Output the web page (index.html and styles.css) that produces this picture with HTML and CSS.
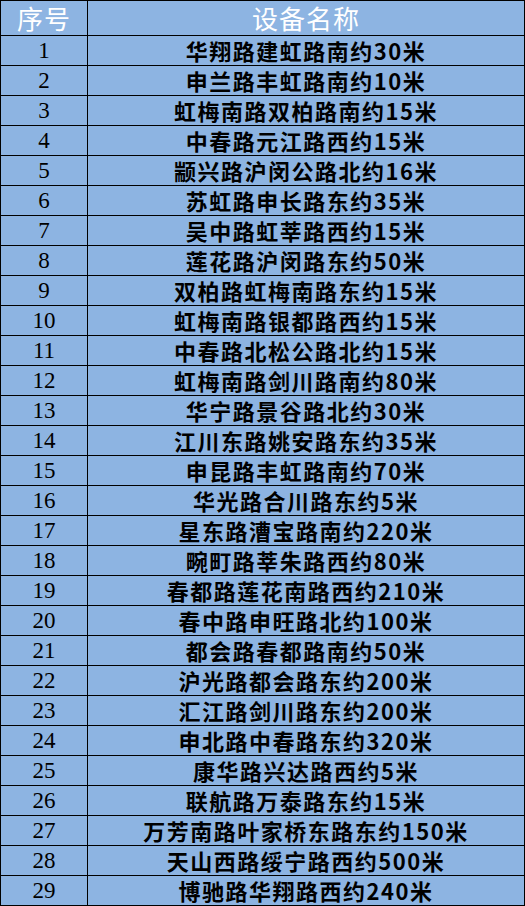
FILE: index.html
```html
<!DOCTYPE html>
<html lang="zh-CN">
<head>
<meta charset="utf-8">
<title>设备名称</title>
<link rel="stylesheet" href="styles.css">
</head>
<body>
<table class="sheet">
  <thead>
    <tr><th class="col-no">序号</th><th class="col-name">设备名称</th></tr>
  </thead>
  <tbody>
    <tr><td class="no">1</td><td class="name">华翔路建虹路南约30米</td></tr>
    <tr><td class="no">2</td><td class="name">申兰路丰虹路南约10米</td></tr>
    <tr><td class="no">3</td><td class="name">虹梅南路双柏路南约15米</td></tr>
    <tr><td class="no">4</td><td class="name">中春路元江路西约15米</td></tr>
    <tr><td class="no">5</td><td class="name">颛兴路沪闵公路北约16米</td></tr>
    <tr><td class="no">6</td><td class="name">苏虹路申长路东约35米</td></tr>
    <tr><td class="no">7</td><td class="name">吴中路虹莘路西约15米</td></tr>
    <tr><td class="no">8</td><td class="name">莲花路沪闵路东约50米</td></tr>
    <tr><td class="no">9</td><td class="name">双柏路虹梅南路东约15米</td></tr>
    <tr><td class="no">10</td><td class="name">虹梅南路银都路西约15米</td></tr>
    <tr><td class="no">11</td><td class="name">中春路北松公路北约15米</td></tr>
    <tr><td class="no">12</td><td class="name">虹梅南路剑川路南约80米</td></tr>
    <tr><td class="no">13</td><td class="name">华宁路景谷路北约30米</td></tr>
    <tr><td class="no">14</td><td class="name">江川东路姚安路东约35米</td></tr>
    <tr><td class="no">15</td><td class="name">申昆路丰虹路南约70米</td></tr>
    <tr><td class="no">16</td><td class="name">华光路合川路东约5米</td></tr>
    <tr><td class="no">17</td><td class="name">星东路漕宝路南约220米</td></tr>
    <tr><td class="no">18</td><td class="name">畹町路莘朱路西约80米</td></tr>
    <tr><td class="no">19</td><td class="name">春都路莲花南路西约210米</td></tr>
    <tr><td class="no">20</td><td class="name">春中路申旺路北约100米</td></tr>
    <tr><td class="no">21</td><td class="name">都会路春都路南约50米</td></tr>
    <tr><td class="no">22</td><td class="name">沪光路都会路东约200米</td></tr>
    <tr><td class="no">23</td><td class="name">汇江路剑川路东约200米</td></tr>
    <tr><td class="no">24</td><td class="name">申北路中春路东约320米</td></tr>
    <tr><td class="no">25</td><td class="name">康华路兴达路西约5米</td></tr>
    <tr><td class="no">26</td><td class="name">联航路万泰路东约15米</td></tr>
    <tr><td class="no">27</td><td class="name">万芳南路叶家桥东路东约150米</td></tr>
    <tr><td class="no">28</td><td class="name">天山西路绥宁路西约500米</td></tr>
    <tr><td class="no">29</td><td class="name">博驰路华翔路西约240米</td></tr>
  </tbody>
</table>
</body>
</html>
```

FILE: styles.css
```css
html, body {
  margin: 0;
  padding: 0;
  background: #ffffff;
}

.sheet {
  border-collapse: separate;
  border-spacing: 1px;
  background: #000000;
  width: 525px;
  table-layout: fixed;
}

.sheet th,
.sheet td {
  background: #8db4e2;
  padding: 0;
  text-align: center;
  vertical-align: middle;
  white-space: nowrap;
}

.col-no {
  width: 86px;
}

.col-name {
  width: 436px;
}

.sheet th {
  height: 34px;
  color: #ffffff;
  font-family: "Noto Sans CJK SC", sans-serif;
  font-weight: 400;
  font-size: 26px;
  line-height: 34px;
  letter-spacing: 1px;
}

.sheet td {
  height: 29px;
  line-height: 29px;
  color: #000000;
}

.no {
  font-family: "Liberation Serif", "Times New Roman", serif;
  font-size: 23px;
  font-weight: 400;
}

.name {
  font-family: "Noto Sans CJK SC", sans-serif;
  font-size: 22px;
  font-weight: 700;
  letter-spacing: 1.5px;
}
```
